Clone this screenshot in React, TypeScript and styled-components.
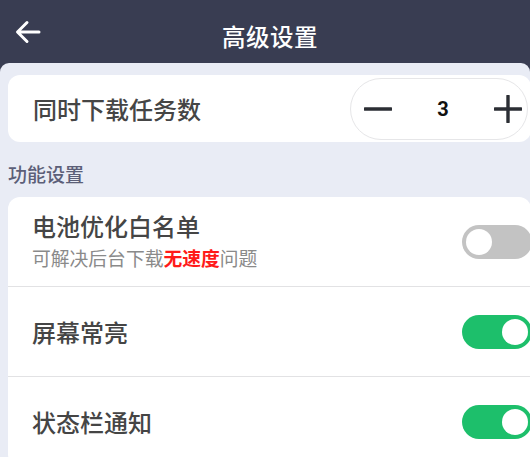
import React from "react";
import styled, { createGlobalStyle } from "styled-components";

const Global = createGlobalStyle`
  html, body { margin: 0; padding: 0; }
  body {
    background: #393d52;
    font-family: "Noto Sans CJK SC", "Noto Sans", sans-serif;
    overflow: hidden;
  }
`;

const Page = styled.div`
  width: 530px;
  height: 457px;
  display: flex;
  flex-direction: column;
  background: #393d52;
  overflow: hidden;
`;

const Header = styled.header`
  height: 63px;
  flex: none;
  position: relative;
  display: flex;
  align-items: center;
  justify-content: center;
  padding-left: 10px;
`;

const BackButton = styled.button`
  position: absolute;
  left: 14px;
  top: 19px;
  width: 28px;
  height: 26px;
  padding: 0;
  border: 0;
  background: transparent;
  display: flex;
  align-items: center;
  justify-content: center;
`;

const Title = styled.h1`
  margin: 0;
  margin-top: 9px;
  color: #ffffff;
  font-size: 23.5px;
  font-weight: 500;
  letter-spacing: 0.5px;
`;

const Body = styled.main`
  flex: 1;
  background: #e9ecf5;
  border-radius: 9px 9px 0 0;
  padding: 12px 0 0 8px;
  display: flex;
  flex-direction: column;
`;

const Card = styled.section`
  width: 523px;
  background: #ffffff;
  border-radius: 12px;
  box-sizing: border-box;
`;

const StepperCard = styled(Card)`
  height: 67px;
  display: flex;
  align-items: center;
  justify-content: space-between;
  padding: 0 3px 0 25px;
`;

const RowTitle = styled.div`
  color: #454545;
  font-size: 24px;
  font-weight: 500;
  line-height: 30px;
`;

const Stepper = styled.div`
  width: 178px;
  height: 62px;
  box-sizing: border-box;
  border: 1.5px solid #e6e6e8;
  border-radius: 32px;
  display: flex;
  align-items: center;
  justify-content: space-between;
  padding: 0 5px 0 13px;
`;

const StepButton = styled.button`
  width: 28px;
  height: 28px;
  padding: 0;
  border: 0;
  background: transparent;
  display: flex;
  align-items: center;
  justify-content: center;
`;

const StepValue = styled.span`
  font-family: Roboto, "Noto Sans", sans-serif;
  font-size: 20px;
  font-weight: 700;
  color: #111111;
`;

const SectionLabel = styled.h2`
  margin: 0;
  height: 55px;
  display: flex;
  align-items: center;
  padding-top: 7px;
  box-sizing: border-box;
  color: #5c5f78;
  font-size: 19px;
  font-weight: 500;
`;

const Row = styled.div`
  height: 89px;
  display: flex;
  align-items: center;
  justify-content: space-between;
  padding: 0 0 0 24px;
  & + & {
    border-top: 1.5px solid #e2e2e4;
  }
`;

const RowText = styled.div`
  display: flex;
  flex-direction: column;
  gap: 5px;
  padding-bottom: 2px;
`;

const RowSub = styled.div`
  color: #8a8a8a;
  font-size: 18.8px;
  line-height: 24px;
`;

const Highlight = styled.span`
  color: #ff1a1a;
  font-weight: 700;
`;

const Switch = styled.div<{ $on: boolean }>`
  width: 70px;
  height: 34px;
  border-radius: 17px;
  background: ${(p) => (p.$on ? "#1dbf6b" : "#c3c3c3")};
  position: relative;
  flex: none;
  margin-right: -1px;
  &::after {
    content: "";
    position: absolute;
    top: 4px;
    left: ${(p) => (p.$on ? "40px" : "4px")};
    width: 26px;
    height: 26px;
    border-radius: 50%;
    background: #ffffff;
  }
`;

const ArrowIcon = () => (
  <svg width="28" height="26" viewBox="0 0 28 26">
    <path
      d="M25 13H4M13 3.5L3.5 13L13 22.5"
      fill="none"
      stroke="#ffffff"
      strokeWidth="3"
      strokeLinecap="round"
      strokeLinejoin="round"
    />
  </svg>
);

const MinusIcon = () => (
  <svg width="28" height="28" viewBox="0 0 28 28">
    <path d="M1 14H27" stroke="#2b2e34" strokeWidth="3.4" strokeLinecap="round" />
  </svg>
);

const PlusIcon = () => (
  <svg width="28" height="28" viewBox="0 0 28 28">
    <path d="M1 14H27M14 1V27" stroke="#2b2e34" strokeWidth="3.4" strokeLinecap="round" />
  </svg>
);

export default function App() {
  return (
    <>
      <Global />
      <Page>
        <Header>
          <BackButton aria-label="back">
            <ArrowIcon />
          </BackButton>
          <Title>高级设置</Title>
        </Header>
        <Body>
          <StepperCard>
            <RowTitle>同时下载任务数</RowTitle>
            <Stepper>
              <StepButton aria-label="minus">
                <MinusIcon />
              </StepButton>
              <StepValue>3</StepValue>
              <StepButton aria-label="plus">
                <PlusIcon />
              </StepButton>
            </Stepper>
          </StepperCard>
          <SectionLabel>功能设置</SectionLabel>
          <Card>
            <Row>
              <RowText>
                <RowTitle>电池优化白名单</RowTitle>
                <RowSub>
                  可解决后台下载<Highlight>无速度</Highlight>问题
                </RowSub>
              </RowText>
              <Switch $on={false} />
            </Row>
            <Row>
              <RowTitle>屏幕常亮</RowTitle>
              <Switch $on={true} />
            </Row>
            <Row>
              <RowTitle>状态栏通知</RowTitle>
              <Switch $on={true} />
            </Row>
          </Card>
        </Body>
      </Page>
    </>
  );
}
